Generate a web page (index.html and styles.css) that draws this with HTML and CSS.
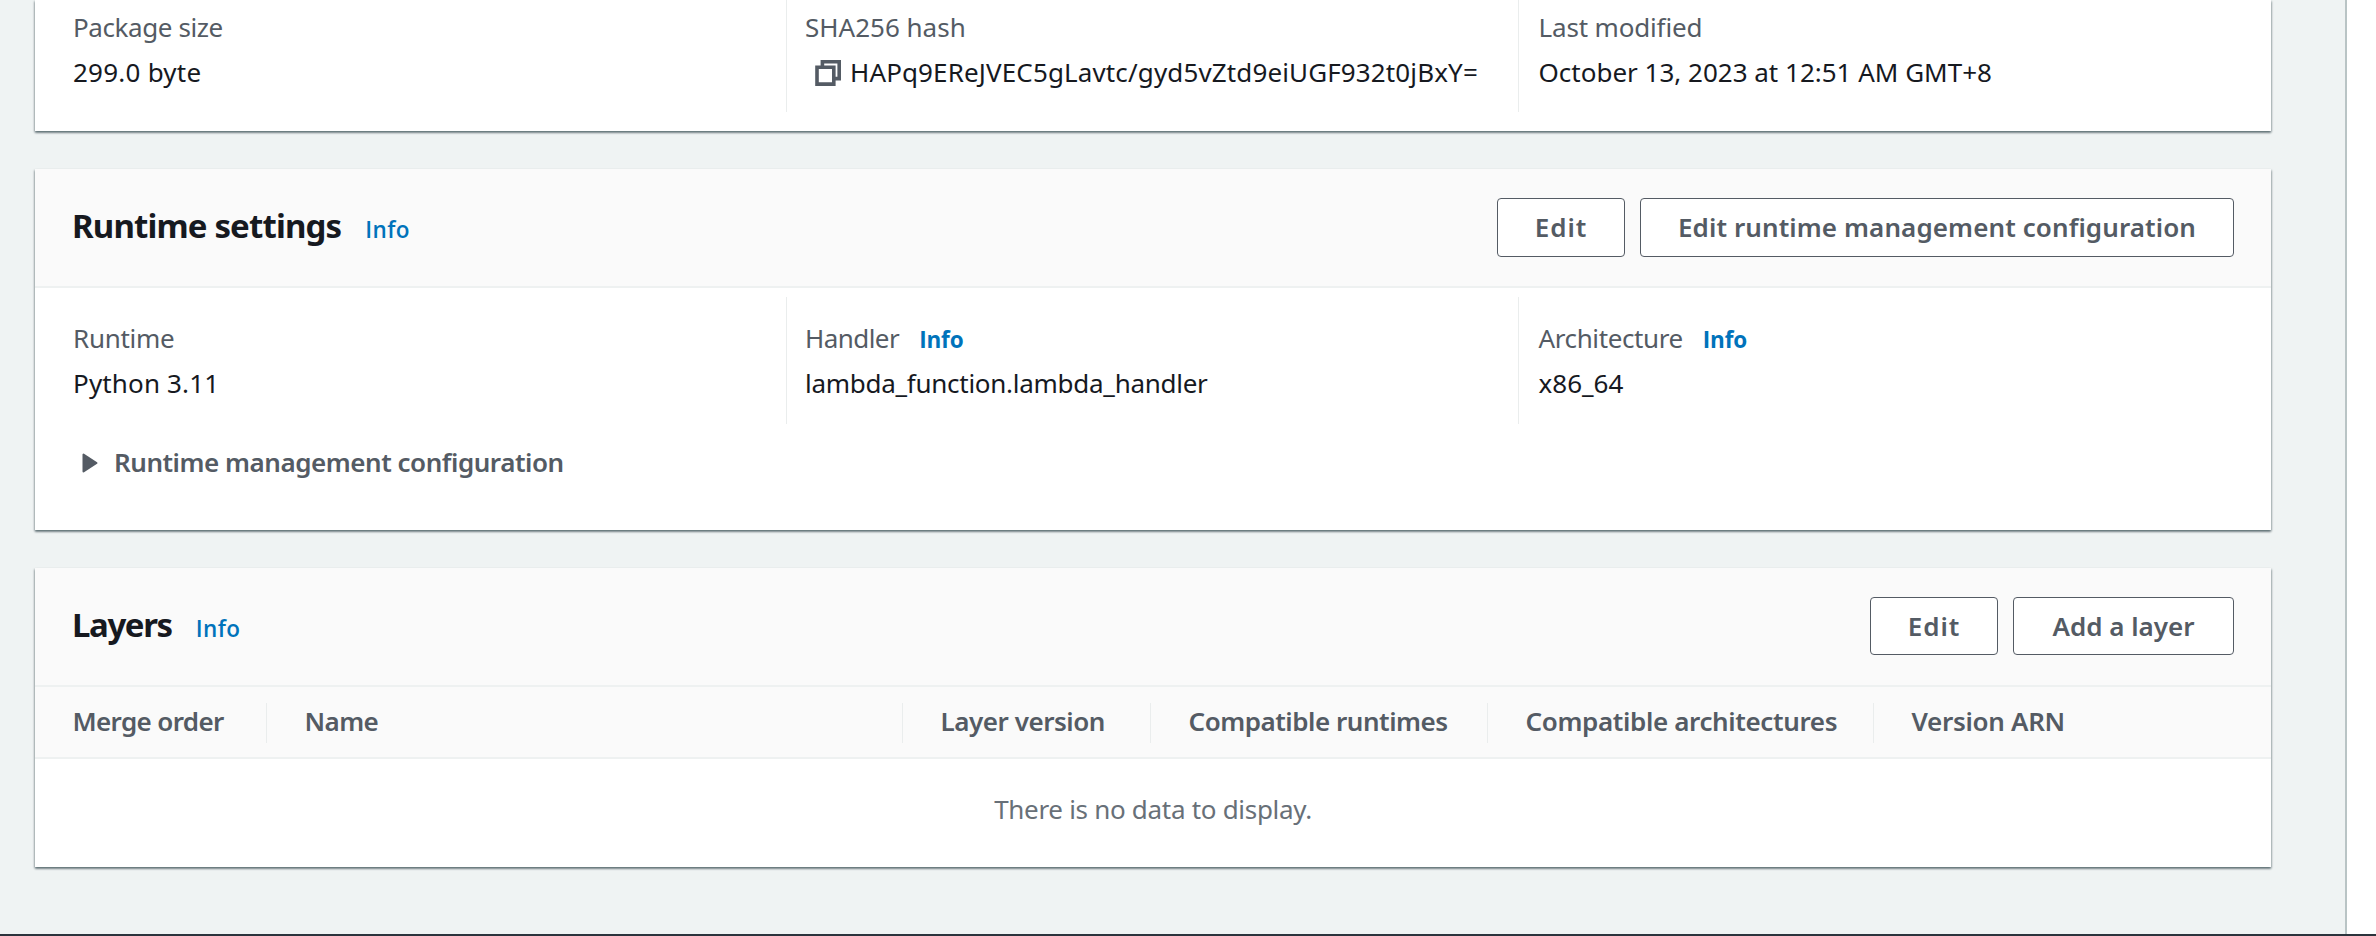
FILE: index.html
```
<!DOCTYPE html>
<html lang="en">
<head>
<meta charset="utf-8">
<title>Lambda function</title>
<link rel="stylesheet" href="styles.css">
</head>
<body>
<div class="app">
  <main class="content">
    <section class="card card-code">
      <div class="columns">
        <div class="column">
          <div class="label ls-package">Package size</div>
          <div class="value ls-byte">299.0 byte</div>
        </div>
        <div class="column">
          <div class="label">SHA256 hash</div>
          <div class="value value-copy">
            <svg class="copy-icon" viewBox="0 0 28 28" fill="none" stroke="#545b64" stroke-width="3.6"><path d="M3 8.3h16.8v16.8H3z"/><path d="M8.4 8V2.8h16.8v16.8H20"/></svg>
            <span class="ls-hash">HAPq9EReJVEC5gLavtc/gyd5vZtd9eiUGF932t0jBxY=</span>
          </div>
        </div>
        <div class="column">
          <div class="label ls-modified">Last modified</div>
          <div class="value">October 13, 2023 at 12:51 AM GMT+8</div>
        </div>
      </div>
    </section>

    <section class="card card-runtime">
      <header class="card-header">
        <h2 class="title ls-title-runtime">Runtime settings<a class="info">Info</a></h2>
        <div class="actions">
          <button class="button button-edit">Edit</button>
          <button class="button button-config">Edit runtime management configuration</button>
        </div>
      </header>
      <div class="columns">
        <div class="column">
          <div class="label ls-runtime">Runtime</div>
          <div class="value ls-python">Python 3.11</div>
        </div>
        <div class="column">
          <div class="label ls-handler">Handler<a class="info">Info</a></div>
          <div class="value ls-lambda">lambda_function.lambda_handler</div>
        </div>
        <div class="column">
          <div class="label ls-arch">Architecture<a class="info">Info</a></div>
          <div class="value">x86_64</div>
        </div>
      </div>
      <div class="expander">
        <svg class="caret" viewBox="0 0 16 20"><path d="M1.5 1.5v17L14.5 10z" fill="#545b64" stroke="#545b64" stroke-width="2" stroke-linejoin="round"/></svg>
        <span>Runtime management configuration</span>
      </div>
    </section>

    <section class="card card-layers">
      <header class="card-header">
        <h2 class="title ls-title-layers">Layers<a class="info">Info</a></h2>
        <div class="actions">
          <button class="button button-edit">Edit</button>
          <button class="button button-add">Add a layer</button>
        </div>
      </header>
      <div class="table-head">
        <div class="th ls-merge">Merge order</div>
        <div class="th ls-name">Name</div>
        <div class="th">Layer version</div>
        <div class="th">Compatible runtimes</div>
        <div class="th ls-archs">Compatible architectures</div>
        <div class="th ls-arn">Version ARN</div>
      </div>
      <div class="empty">There is no data to display.</div>
    </section>
  </main>
  <aside class="side"></aside>
</div>
<footer class="bottom"></footer>
</body>
</html>
```
FILE: styles.css
```
* { box-sizing: border-box; }

body {
  margin: 0;
  height: 936px;
  overflow: hidden;
  display: flex;
  flex-direction: column;
  background: #eff3f3;
  color: #16191f;
  font: 26px/36px "Noto Sans", sans-serif;
}

.app { flex: 1; display: flex; min-height: 0; }

.content {
  flex: 1;
  padding: 0 74px 0 35px;
  display: flex;
  flex-direction: column;
}

.side {
  width: 31px;
  background: #fff;
  border-left: 2px solid #b9c4c5;
}

.bottom { height: 2px; background: #2b333c; }

.card {
  background: #fff;
  box-shadow: 0 2px 2px rgba(0, 28, 36, .42), 1px 1px 2px rgba(0, 28, 36, .2), -1px 1px 2px rgba(0, 28, 36, .2);
}

.card-code { height: 131px; margin-bottom: 38px; }
.card-runtime { height: 361px; margin-bottom: 38px; }
.card-layers { height: 299px; }

.card-header {
  height: 119px;
  padding: 0 37px;
  display: flex;
  justify-content: space-between;
  background: #fafafa;
  border-bottom: 2px solid #eef1f1;
}

.title {
  margin: 0;
  font-size: 33px;
  font-weight: 700;
  line-height: 113px;
}

.info {
  margin-left: 20px;
  color: #0073bb;
  font-family: "Open Sans", sans-serif;
  font-size: 22.5px;
  font-weight: 700;
  letter-spacing: -.15px;
  line-height: 1;
}

.title .info { margin-left: 24px; font-weight: 600; letter-spacing: .4px; }

.actions { display: flex; gap: 15px; padding-top: 29px; }

.button {
  height: 59px;
  padding: 0;
  border: 1px solid #545b64;
  border-radius: 4px;
  background: #fff;
  color: #545b64;
  font: 600 26px/57px "Noto Sans", sans-serif;
}

.button-edit { width: 128px; letter-spacing: .95px; }
.button-config { width: 594px; letter-spacing: .1px; }
.button-add { width: 221px; }
.card-layers .button { height: 58px; line-height: 56px; }

.columns { display: grid; grid-template-columns: 751px 732px 1fr; }
.column { padding: 19px 0 18px 18px; }
.column:first-child { padding-left: 38px; }
.column:last-child { padding-left: 19.5px; }
.column + .column { border-left: 1px solid #eaeded; }
.card-code .column { padding-top: 5px; padding-bottom: 17px; }
.card-runtime .columns { margin-top: 9px; }

.label { color: #545b64; line-height: 45px; height: 45px; }
.value { line-height: 45px; height: 45px; }
.value-copy { display: flex; }
.copy-icon { width: 28px; height: 28px; margin: 9px 8px 0 9px; }

.expander {
  display: flex;
  align-items: flex-start;
  gap: 16px;
  padding: 20px 0 0 47px;
  color: #545b64;
  font-weight: 600;
  letter-spacing: -.46px;
}
.caret { width: 16px; height: 20px; margin-top: 9px; }

.table-head {
  height: 72px;
  padding-top: 16px;
  display: grid;
  grid-template-columns: 231px 636px 248px 337px 386px 1fr;
  background: #fafafa;
  border-bottom: 2px solid #eef1f1;
  color: #545b64;
  font-weight: 600;
  letter-spacing: -.46px;
}
.th { height: 40px; padding-left: 37.5px; }
.th + .th { border-left: 1px solid #eaeded; }

.empty {
  color: #687078;
  line-height: 101px;
  text-align: center;
  letter-spacing: -.3px;
}

/* Tracking adjustments per text */
.ls-package { letter-spacing: -.41px; }
.ls-byte { letter-spacing: .24px; }
.ls-hash { letter-spacing: .13px; }
.ls-modified { letter-spacing: -.16px; }
.ls-title-runtime { letter-spacing: -.85px; }
.ls-title-layers { letter-spacing: -1.4px; }
.ls-runtime { letter-spacing: -.29px; }
.ls-python { letter-spacing: .15px; }
.ls-handler { letter-spacing: -.55px; }
.ls-lambda { letter-spacing: -.27px; }
.ls-arch { letter-spacing: -.39px; }
.ls-merge { letter-spacing: -.64px; }
.ls-name { letter-spacing: -.6px; }
.ls-archs { letter-spacing: -.36px; }
.ls-arn { letter-spacing: -.31px; }
```
